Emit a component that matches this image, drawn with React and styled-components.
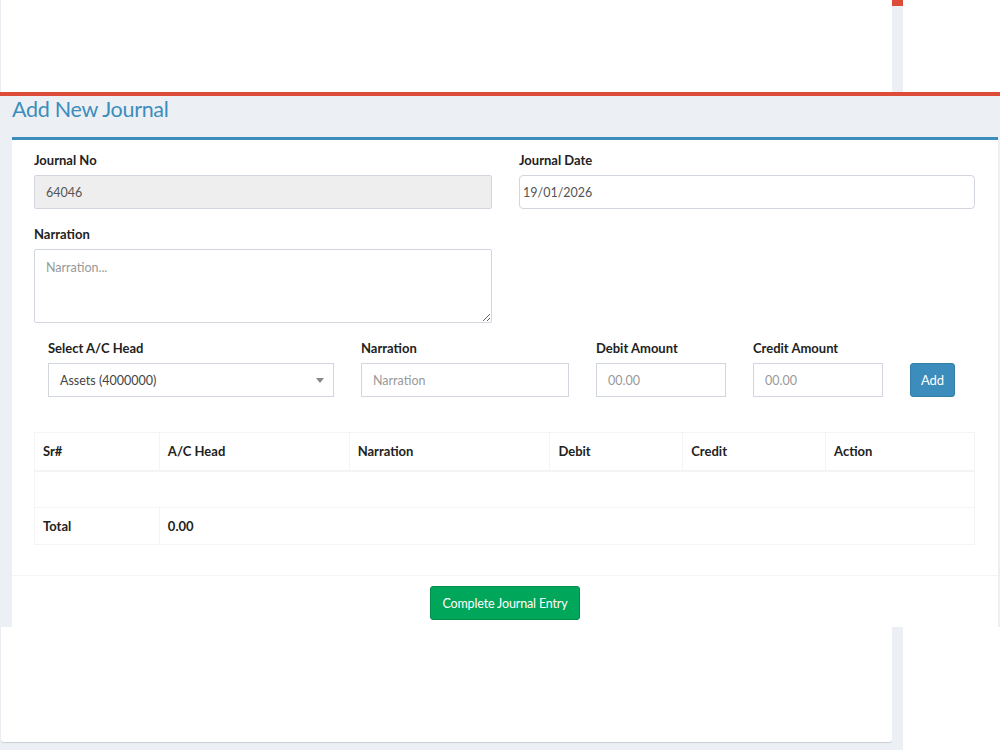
import styled, { createGlobalStyle } from "styled-components";

const GlobalStyle = createGlobalStyle`
  html, body {
    margin: 0;
    padding: 0;
    background: #ffffff;
    font-family: Lato, "Noto Sans", sans-serif;
    color: #333;
  }
  * { box-sizing: border-box; }
`;

// page behind the journal panel
const Page = styled.div`
  position: relative;
  display: flex;
  width: 1000px;
  height: 750px;
  overflow: hidden;
`;

const MainColumn = styled.div`
  width: 892px;
  height: 750px;
  background: #ecf0f5;
  padding-left: 1px;
`;

const Card = styled.div`
  height: 742px;
  background: #fff;
  border-radius: 0 0 3px 3px;
  box-shadow: 0 1px 1px rgba(0, 0, 0, 0.15);
`;

const ScrollStrip = styled.div`
  width: 11px;
  height: 750px;
  background: #ecf0f5;
  border-top: 6px solid #dd4b39;
`;

const Aside = styled.div`
  flex: 1;
  background: #fff;
`;

// the journal panel lies over the page
const Overlay = styled.section`
  position: absolute;
  top: 92px;
  left: 0;
  right: 0;
  height: 535px;
  background: #ecf0f5;
  border-top: 4px solid #dd4b39;
  padding: 0 2px 0 12px;
  display: flex;
  flex-direction: column;
`;

const Title = styled.h1`
  margin: 0;
  height: 41px;
  font-size: 21.5px;
  letter-spacing: -0.3px;
  font-weight: 400;
  color: #3c8dbc;
  line-height: 26px;
`;

const Box = styled.div`
  flex: 1;
  background: #fff;
  border-top: 3px solid #3c8dbc;
  display: flex;
  flex-direction: column;
`;

const BoxBody = styled.div`
  padding: 13px 23px 0 22px;
  flex: 1;
`;

const TwoCols = styled.div`
  display: grid;
  grid-template-columns: 458px 456px;
  column-gap: 27px;
  row-gap: 18px;
`;

const Field = styled.div`
  display: flex;
  flex-direction: column;
`;

const Label = styled.label`
  font-size: 13px;
  font-weight: 700;
  color: #222;
  height: 15px;
  line-height: 15px;
  margin-bottom: 7px;
`;

const Input = styled.input`
  height: 34px;
  width: 100%;
  border: 1px solid #d2d6de;
  border-radius: ${({ $radius }) => $radius || 0}px;
  background: ${({ $readOnly }) => ($readOnly ? "#eeeeee" : "#fff")};
  padding: 0 ${({ $padLeft }) => $padLeft || 11}px;
  padding-right: 11px;
  font-family: inherit;
  font-size: 12.5px;
  color: #555;
  outline: none;
  &::placeholder { color: #999; }
`;

const TextArea = styled.textarea`
  height: 74px;
  width: 100%;
  border: 1px solid #d2d6de;
  border-radius: 2px;
  padding: 10px 11px;
  font-family: inherit;
  font-size: 12.5px;
  color: #555;
  outline: none;
  &::placeholder { color: #999; }
`;

const EntryRow = styled.div`
  display: grid;
  grid-template-columns: 286px 208px 130px 130px 45px;
  column-gap: 27px;
  padding-left: 14px;
  margin-top: 18px;
  align-items: end;
`;

const SelectBox = styled.div`
  position: relative;
  height: 34px;
  border: 1px solid #d2d6de;
  display: flex;
  align-items: center;
  padding: 0 11px;
  font-size: 12.5px;
  color: #444;
`;

const Caret = styled.span`
  position: absolute;
  right: 9px;
  top: 14px;
  border-left: 4px solid transparent;
  border-right: 4px solid transparent;
  border-top: 5px solid #888;
`;

const AddButton = styled.button`
  height: 34px;
  width: 45px;
  border: 1px solid #367fa9;
  border-radius: 3px;
  background: #3c8dbc;
  color: #fff;
  font-family: inherit;
  font-size: 13px;
  padding: 0;
`;

const Table = styled.table`
  width: 941px;
  margin-top: 35px;
  border-collapse: collapse;
  font-size: 13px;
  color: #222;
`;

const Th = styled.th`
  width: ${({ $w }) => $w}px;
  height: 38px;
  text-align: left;
  font-weight: 700;
  padding: 0 8px;
  border: 1px solid #f4f4f4;
  border-bottom: 2px solid #f4f4f4;
`;

const Td = styled.td`
  height: 37px;
  padding: 0 8px;
  font-weight: ${({ $bold }) => ($bold ? 700 : 400)};
  border: 1px solid #f4f4f4;
`;

const Footer = styled.div`
  border-top: 1px solid #f4f4f4;
  height: 52px;
  display: flex;
  justify-content: center;
  align-items: flex-start;
  padding-top: 10px;
`;

const SuccessButton = styled.button`
  height: 34px;
  padding: 0 11px;
  border: 1px solid #008d4c;
  border-radius: 3px;
  background: #00a65a;
  color: #fff;
  font-family: inherit;
  font-size: 12.5px;
  letter-spacing: -0.15px;
`;

const columns = [
  ["Sr#", 125],
  ["A/C Head", 190],
  ["Narration", 201],
  ["Debit", 133],
  ["Credit", 143],
  ["Action", 149],
];

export default function App() {
  return (
    <>
      <GlobalStyle />
      <Page>
        <MainColumn>
          <Card />
        </MainColumn>
        <ScrollStrip />
        <Aside />

        <Overlay>
          <Title>Add New Journal</Title>
          <Box>
            <BoxBody>
              <TwoCols>
                <Field>
                  <Label>Journal No</Label>
                  <Input $readOnly readOnly value="64046" $radius={2} />
                </Field>
                <Field>
                  <Label>Journal Date</Label>
                  <Input readOnly value="19/01/2026" $radius={4} $padLeft={3} />
                </Field>
                <Field>
                  <Label>Narration</Label>
                  <TextArea placeholder="Narration..." />
                </Field>
              </TwoCols>

              <EntryRow>
                <Field>
                  <Label>Select A/C Head</Label>
                  <SelectBox>
                    Assets (4000000)
                    <Caret />
                  </SelectBox>
                </Field>
                <Field>
                  <Label>Narration</Label>
                  <Input placeholder="Narration" />
                </Field>
                <Field>
                  <Label>Debit Amount</Label>
                  <Input placeholder="00.00" />
                </Field>
                <Field>
                  <Label>Credit Amount</Label>
                  <Input placeholder="00.00" />
                </Field>
                <AddButton>Add</AddButton>
              </EntryRow>

              <Table>
                <thead>
                  <tr>
                    {columns.map(([name, w]) => (
                      <Th key={name} $w={w}>
                        {name}
                      </Th>
                    ))}
                  </tr>
                </thead>
                <tbody>
                  <tr>
                    <Td colSpan={6} />
                  </tr>
                  <tr>
                    <Td $bold>Total</Td>
                    <Td $bold colSpan={5}>
                      0.00
                    </Td>
                  </tr>
                </tbody>
              </Table>
            </BoxBody>
            <Footer>
              <SuccessButton>Complete Journal Entry</SuccessButton>
            </Footer>
          </Box>
        </Overlay>
      </Page>
    </>
  );
}
